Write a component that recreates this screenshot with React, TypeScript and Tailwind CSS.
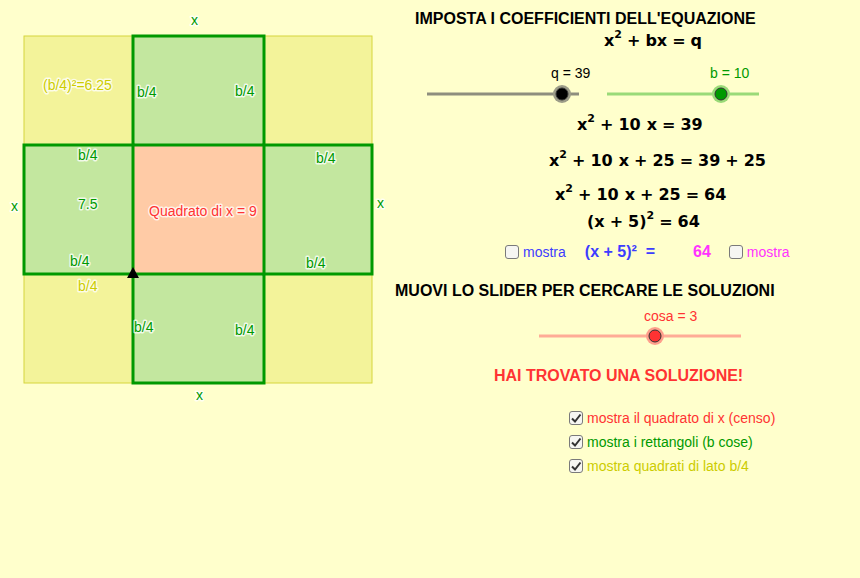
import React from "react";

const sans = { fontFamily: '"Liberation Sans", Arial, sans-serif' };
const math = { fontFamily: '"DejaVu Sans", sans-serif' };

// grid of the figure (page coordinates)
const X = [24, 133, 264, 372];
const Y = [36, 145, 274, 383];

const halo = {
  stroke: "#ffffff",
  strokeOpacity: 0.75,
  strokeWidth: 3,
  strokeLinejoin: "round" as const,
  paintOrder: "stroke" as const,
};

function Label({ x, y, fill, children }: { x: number; y: number; fill: string; children: React.ReactNode }) {
  return (
    <text x={x} y={y} fill={fill} fontSize={14} style={{ ...sans, ...halo }}>
      {children}
    </text>
  );
}

function Figure() {
  const green = "#009900";
  const gFill = "#c3e79f";
  const yFill = "#f3f39a";
  return (
    <svg width={390} height={410} className="block">
      {/* yellow b/4 squares */}
      <rect x={X[0]} y={Y[0]} width={X[3] - X[0]} height={Y[3] - Y[0]} fill={yFill} stroke="#d6d63c" strokeWidth={1} />
      {/* centre square */}
      <rect x={X[1]} y={Y[1]} width={X[2] - X[1]} height={Y[2] - Y[1]} fill="#ffcba6" />
      {/* rectangles b/4 * x */}
      <rect x={X[1]} y={Y[0]} width={X[2] - X[1]} height={Y[1] - Y[0]} fill={gFill} stroke={green} strokeWidth={3} />
      <rect x={X[1]} y={Y[2]} width={X[2] - X[1]} height={Y[3] - Y[2]} fill={gFill} stroke={green} strokeWidth={3} />
      <rect x={X[0]} y={Y[1]} width={X[1] - X[0]} height={Y[2] - Y[1]} fill={gFill} stroke={green} strokeWidth={3} />
      <rect x={X[2]} y={Y[1]} width={X[3] - X[2]} height={Y[2] - Y[1]} fill={gFill} stroke={green} strokeWidth={3} />

      <Label x={191} y={25} fill={green}>x</Label>
      <Label x={196} y={400} fill={green}>x</Label>
      <Label x={11} y={211} fill={green}>x</Label>
      <Label x={377} y={208} fill={green}>x</Label>

      <Label x={43} y={90} fill="#cccc00">(b/4)²=6.25</Label>
      <Label x={137} y={97} fill={green}>b/4</Label>
      <Label x={235} y={96} fill={green}>b/4</Label>
      <Label x={78} y={160} fill={green}>b/4</Label>
      <Label x={78} y={209} fill={green}>7.5</Label>
      <Label x={70} y={266} fill={green}>b/4</Label>
      <Label x={316} y={163} fill={green}>b/4</Label>
      <Label x={306} y={268} fill={green}>b/4</Label>
      <Label x={78} y={291} fill="#cccc00">b/4</Label>
      <Label x={134} y={332} fill={green}>b/4</Label>
      <Label x={235} y={335} fill={green}>b/4</Label>
      <Label x={149} y={216} fill="#ff3333">Quadrato di x = 9</Label>

      <polygon points="133,267 127,278 139,278" fill="#000000" />
    </svg>
  );
}

function Knob({ cx, cy, fill, haloColor }: { cx: number; cy: number; fill: string; haloColor: string }) {
  return (
    <g>
      <circle cx={cx} cy={cy} r={9} fill={haloColor} />
      <circle cx={cx} cy={cy} r={6} fill={fill} stroke="#333333" strokeWidth={1} />
    </g>
  );
}

function Op({ c }: { c: string }) {
  return <span className="mx-[5px]">{c}</span>;
}

function Sq() {
  return <sup className="text-[11px] -top-[6px]">2</sup>;
}

function EqRow({ pl, mt, children }: { pl: string; mt: string; children: React.ReactNode }) {
  return (
    <div className={`h-[24px] flex items-center whitespace-nowrap text-[16px] font-bold text-black leading-none ${pl} ${mt}`} style={math}>
      {children}
    </div>
  );
}

function Box({ checked }: { checked?: boolean }) {
  return (
    <span className="w-[14px] h-[14px] shrink-0 rounded-[3px] border-[1.5px] border-[#7a7a7a] bg-[#f6f6f2] flex items-center justify-center">
      {checked && (
        <svg width={12} height={12} viewBox="0 0 12 12">
          <path d="M2 6.5 L5 9.5 L10.5 2.5" fill="none" stroke="#333333" strokeWidth={2} />
        </svg>
      )}
    </span>
  );
}

export default function App() {
  return (
    <div className="w-[860px] h-[578px] bg-[#ffffcc] flex overflow-hidden" style={sans}>
      <div className="w-[390px] shrink-0">
        <Figure />
      </div>

      <div className="flex-1 flex flex-col">
        <div className="mt-[10px] h-[18px] pl-[25px] flex items-center text-[16px] font-bold text-black whitespace-nowrap leading-none">
          IMPOSTA I COEFFICIENTI DELL'EQUAZIONE
        </div>

        <EqRow pl="pl-[214px]" mt="mt-[1px]">
          x<Sq /><Op c="+" />bx<Op c="=" />q
        </EqRow>

        {/* sliders q and b */}
        <div className="mt-[10px] pl-[30px] h-[40px]">
          <svg width={345} height={40} className="block">
            <text x={131} y={15} fontSize={14} fill="#000000" style={sans}>q = 39</text>
            <line x1={7} y1={31} x2={159} y2={31} stroke="#8e8e7e" strokeWidth={3} />
            <Knob cx={142} cy={31} fill="#000000" haloColor="#9c9c88" />
            <text x={290} y={15} fontSize={14} fill="#009900" style={sans}>b = 10</text>
            <line x1={187} y1={31} x2={339} y2={31} stroke="#9ada78" strokeWidth={3} />
            <Knob cx={301} cy={31} fill="#009900" haloColor="#9ada78" />
          </svg>
        </div>

        <EqRow pl="pl-[187px]" mt="mt-[10px]">
          x<Sq /><Op c="+" />10<span className="ml-[6px]">x</span><Op c="=" />39
        </EqRow>
        <EqRow pl="pl-[159px]" mt="mt-[12px]">
          x<Sq /><Op c="+" />10<span className="ml-[6px]">x</span><Op c="+" />25<Op c="=" />39<Op c="+" />25
        </EqRow>
        <EqRow pl="pl-[165px]" mt="mt-[10px]">
          x<Sq /><Op c="+" />10<span className="ml-[6px]">x</span><Op c="+" />25<Op c="=" />64
        </EqRow>
        <EqRow pl="pl-[197px]" mt="mt-[3px]">
          (x<Op c="+" />5)<Sq /><Op c="=" />64
        </EqRow>

        <div className="mt-[8px] h-[20px] pl-[115px] flex items-center whitespace-nowrap leading-none">
          <Box />
          <span className="ml-[4px] text-[14px] text-[#3d3dff]">mostra</span>
          <span className="ml-[19px] text-[16px] font-bold text-[#3d3dff]">(x + 5)²&nbsp;&nbsp;=</span>
          <span className="ml-[38px] text-[16px] font-bold text-[#ff33ff]">64</span>
          <span className="ml-[18px]"><Box /></span>
          <span className="ml-[4px] text-[14px] text-[#ff33ff]">mostra</span>
        </div>

        <div className="mt-[19px] h-[20px] pl-[5px] flex items-center text-[16px] font-bold text-black whitespace-nowrap leading-none">
          MUOVI LO SLIDER PER CERCARE LE SOLUZIONI
        </div>

        {/* slider cosa */}
        <div className="mt-[5px] pl-[140px] h-[40px]">
          <svg width={220} height={40} className="block">
            <text x={114} y={15} fontSize={14} fill="#ff3333" style={sans}>cosa = 3</text>
            <line x1={9} y1={30} x2={211} y2={30} stroke="#ffac96" strokeWidth={3} />
            <Knob cx={125} cy={30} fill="#ff3333" haloColor="#ff9f8c" />
          </svg>
        </div>

        <div className="mt-[20px] h-[20px] pl-[104px] flex items-center text-[16px] font-bold text-[#ff3333] whitespace-nowrap leading-none">
          HAI TROVATO UNA SOLUZIONE!
        </div>

        <div className="mt-[22px] flex flex-col gap-[4px] pl-[179px] text-[14px] leading-none whitespace-nowrap">
          <div className="h-[20px] flex items-center gap-[4px]">
            <Box checked />
            <span className="text-[#ff3333]">mostra il quadrato di x (censo)</span>
          </div>
          <div className="h-[20px] flex items-center gap-[4px]">
            <Box checked />
            <span className="text-[#009900]">mostra i rettangoli (b cose)</span>
          </div>
          <div className="h-[20px] flex items-center gap-[4px]">
            <Box checked />
            <span className="text-[#cccc00]">mostra quadrati di lato b/4</span>
          </div>
        </div>
      </div>
    </div>
  );
}
